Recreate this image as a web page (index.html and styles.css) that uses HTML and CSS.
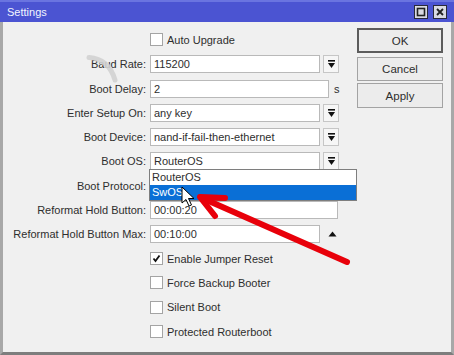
FILE: index.html
```html
<!DOCTYPE html>
<html>
<head>
    <title>Settings</title>
    <link rel="stylesheet" href="styles.css">
</head>
<body>
    <div class="window">
        <div class="titlebar">
            <span class="title">Settings</span>
            <div class="title-btns">
                <span class="tbtn"><svg width="12" height="12" viewBox="0 0 12 12"><rect x="2.5" y="2.5" width="7" height="7" fill="none" stroke="#222" stroke-width="1.6"/></svg></span>
                <span class="tbtn"><svg width="12" height="12" viewBox="0 0 12 12"><path d="M3 3 L9 9 M9 3 L3 9" stroke="#222" stroke-width="1.8"/></svg></span>
            </div>
        </div>
        <div class="body">
            <div class="form">
                <div class="label"></div>
                <div class="field"><span class="check"></span><span>Auto Upgrade</span></div>

                <div class="label">Baud Rate:</div>
                <div class="field"><span class="input w170">115200</span><span class="drop"><svg width="9" height="10" viewBox="0 0 9 10"><rect x="1" y="1" width="7" height="1.6" fill="#111"/><path d="M1 4 L8 4 L4.5 9 Z" fill="#111"/></svg></span></div>

                <div class="label">Boot Delay:</div>
                <div class="field"><span class="input w179">2</span><span class="unit">s</span></div>

                <div class="label">Enter Setup On:</div>
                <div class="field"><span class="input w170">any key</span><span class="drop"><svg width="9" height="10" viewBox="0 0 9 10"><rect x="1" y="1" width="7" height="1.6" fill="#111"/><path d="M1 4 L8 4 L4.5 9 Z" fill="#111"/></svg></span></div>

                <div class="label">Boot Device:</div>
                <div class="field"><span class="input w170">nand-if-fail-then-ethernet</span><span class="drop"><svg width="9" height="10" viewBox="0 0 9 10"><rect x="1" y="1" width="7" height="1.6" fill="#111"/><path d="M1 4 L8 4 L4.5 9 Z" fill="#111"/></svg></span></div>

                <div class="label">Boot OS:</div>
                <div class="field"><span class="input w170">RouterOS</span><span class="drop"><svg width="9" height="10" viewBox="0 0 9 10"><rect x="1" y="1" width="7" height="1.6" fill="#111"/><path d="M1 4 L8 4 L4.5 9 Z" fill="#111"/></svg></span></div>

                <div class="label">Boot Protocol:</div>
                <div class="field"><span class="input w170"></span><span class="drop"></span></div>

                <div class="label">Reformat Hold Button:</div>
                <div class="field"><span class="input w188">00:00:20</span></div>

                <div class="label">Reformat Hold Button Max:</div>
                <div class="field"><span class="input w170">00:10:00</span><span class="up"><svg width="9" height="6" viewBox="0 0 9 6"><path d="M0.5 5.5 L8.5 5.5 L4.5 0.5 Z" fill="#111"/></svg></span></div>

                <div class="label"></div>
                <div class="field"><span class="check"><svg width="11" height="11" viewBox="0 0 11 11"><path d="M2.5 5.5 L4.5 8 L8.5 2.5" fill="none" stroke="#111" stroke-width="1.8"/></svg></span><span>Enable Jumper Reset</span></div>

                <div class="label"></div>
                <div class="field"><span class="check"></span><span>Force Backup Booter</span></div>

                <div class="label"></div>
                <div class="field"><span class="check"></span><span>Silent Boot</span></div>

                <div class="label"></div>
                <div class="field"><span class="check"></span><span>Protected Routerboot</span></div>
            </div>
            <div class="actions">
                <div class="btn default">OK</div>
                <div class="btn cancel">Cancel</div>
                <div class="btn">Apply</div>
            </div>
        </div>

        <ul class="droplist">
            <li>RouterOS</li>
            <li class="selected">SwOS</li>
        </ul>

        <svg class="overlay" width="454" height="355" viewBox="0 0 454 355">
            <path d="M89 57.5 Q109 59 115 80" fill="none" stroke="#d2d2d2" stroke-width="5" stroke-linecap="round" opacity="0.9"/>
            <g stroke="#e8000a" stroke-width="6" stroke-linecap="round" stroke-linejoin="round" fill="none">
                <path d="M347 262 L202 198"/>
                <path d="M225 198 L200 197 L215 216"/>
            </g>
            <path d="M182 187 L182 203 L186 199.5 L189 206 L191.5 205 L188.5 198.5 L194 198.5 Z" fill="#fff" stroke="#000" stroke-width="1" stroke-linejoin="round"/>
        </svg>
    </div>
</body>
</html>
```

FILE: styles.css
```css
body{
    margin: 0;
    padding: 0;
    background-color: #8c8c8c;
    font-family: "Liberation Sans", Arial, sans-serif;
    font-size: 11px;
    color: #2e2e2e;
}
.window{
    position: relative;
    width: 454px;
    height: 355px;
    display: flex;
    flex-direction: column;
    overflow: hidden;
}
.titlebar{
    height: 20px;
    border-top: 2px solid #6a74e0;
    background-color: #4b54d2;
    display: flex;
    align-items: center;
    justify-content: space-between;
    padding: 0 7px 0 7px;
}
.title{
    color: #f2f4ff;
    font-size: 11px;
}
.title-btns{
    display: flex;
    gap: 5px;
}
.tbtn{
    width: 12px;
    height: 12px;
    background-color: #d9dae2;
    border: 1px solid #2a2a3a;
    display: flex;
}
.body{
    flex: 1;
    display: flex;
    background-color: #f0f0f0;
    border-left: 3px solid #a8a8a8;
    border-right: 3px solid #a8a8a8;
    border-bottom: 3px solid #7d7d7d;
}
.form{
    flex: 1;
    display: grid;
    grid-template-columns: 147px auto;
    grid-auto-rows: 24.3px;
    align-items: center;
    padding-top: 5.8px;
}
.label{
    text-align: right;
    padding-right: 4px;
    white-space: nowrap;
}
.field{
    display: flex;
    align-items: center;
    white-space: nowrap;
}
.input{
    box-sizing: border-box;
    height: 18px;
    line-height: 16px;
    padding-left: 3px;
    background-color: #fff;
    border: 1px solid #b9b9b9;
    overflow: hidden;
}
.w170{ width: 170px; }
.w179{ width: 179px; }
.w188{ width: 188px; }
.drop{
    box-sizing: border-box;
    width: 16px;
    height: 18px;
    margin-left: 3px;
    background-color: #f6f6f6;
    border: 1px solid #c6c6c6;
    display: flex;
    align-items: center;
    justify-content: center;
}
.unit{
    margin-left: 5px;
}
.up{
    margin-left: 8px;
    display: flex;
}
.check{
    box-sizing: border-box;
    width: 13px;
    height: 13px;
    background-color: #fff;
    border: 1px solid #a4a4a4;
    margin-right: 4px;
    display: flex;
    align-items: center;
    justify-content: center;
}
.actions{
    width: 86px;
    margin-right: 8px;
    padding-top: 6px;
    display: flex;
    flex-direction: column;
}
.btn{
    box-sizing: border-box;
    height: 25px;
    border: 1px solid #a3a3a3;
    background-color: #ececec;
    display: flex;
    align-items: center;
    justify-content: center;
    font-size: 11.5px;
}
.btn.default{
    border: 2px solid #5c5c5c;
    margin-bottom: 4px;
}
.btn.cancel{
    height: 24px;
    margin-bottom: 2px;
}
.droplist{
    position: absolute;
    left: 149px;
    top: 169px;
    width: 208px;
    margin: 0;
    padding: 0;
    list-style: none;
    box-sizing: border-box;
    border: 1px solid #7e7e7e;
    background-color: #fff;
}
.droplist li{
    height: 15px;
    line-height: 15px;
    padding-left: 2px;
}
.droplist li.selected{
    background-color: #0a6fd6;
    color: #fff;
}
.overlay{
    position: absolute;
    left: 0;
    top: 0;
}
```
